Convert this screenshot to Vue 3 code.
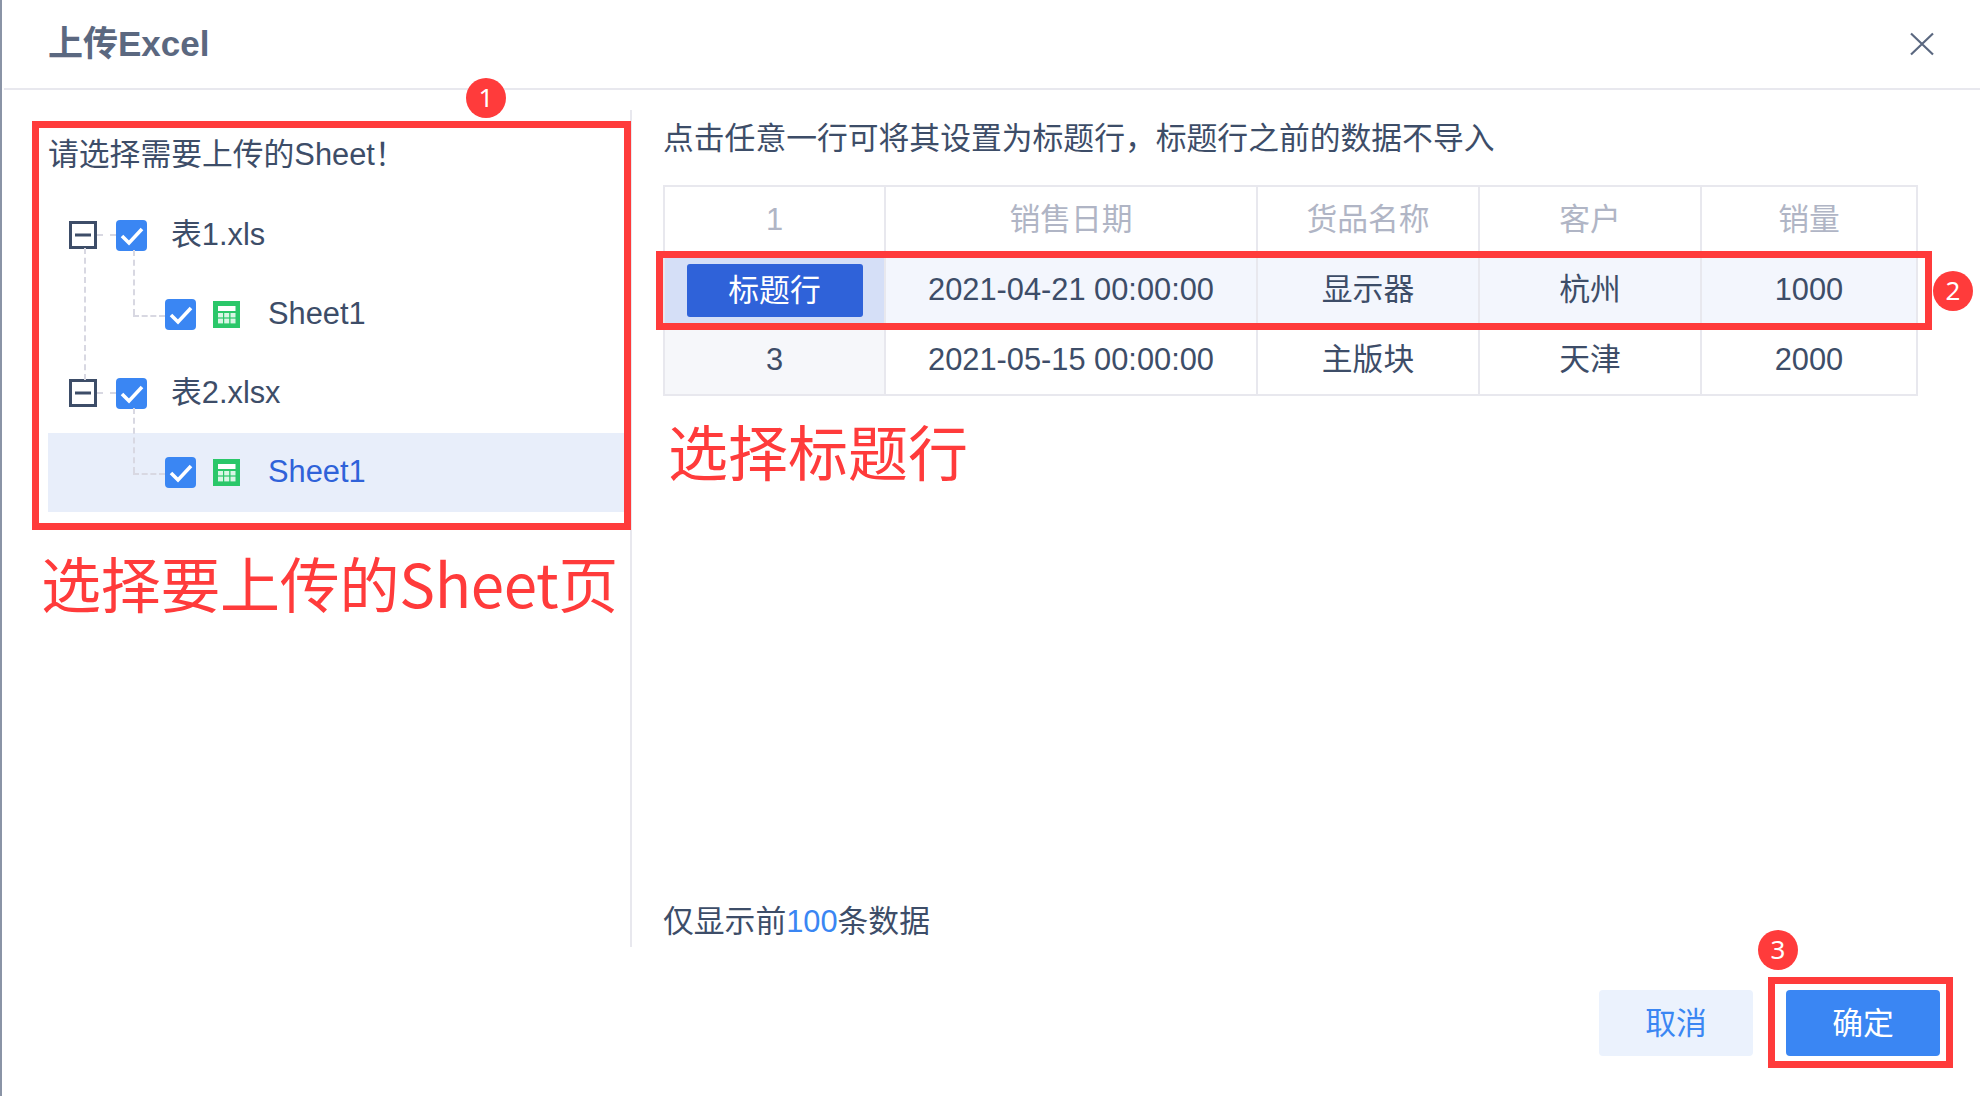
<template>
  <div class="dialog">
    <div class="header">
      <span class="title">上传Excel</span>
      <svg class="close" width="24" height="24" viewBox="0 0 24 24">
        <path d="M1 1.5 23 22.5M23 1.5 1 22.5" stroke="#5b6880" stroke-width="2.2" fill="none" />
      </svg>
    </div>

    <div class="body">
      <div class="left">
        <div class="prompt">请选择需要上传的Sheet！</div>
        <div class="tree">
          <!-- 树的虚线 -->
          <i class="dash v v-root"></i>
          <i class="dash h h-file1"></i>
          <i class="dash h h-file2"></i>
          <i class="dash v v-child1"></i>
          <i class="dash h h-child1"></i>
          <i class="dash v v-child2"></i>
          <i class="dash h h-child2"></i>

          <div
            v-for="node in nodes"
            :key="node.id"
            class="node"
            :class="{ child: node.child, active: node.active }"
          >
            <svg v-if="!node.child" class="fold" width="28" height="28" viewBox="0 0 28 28">
              <rect x="1.5" y="1.5" width="25" height="25" fill="#fff" stroke="#3d4d68" stroke-width="3" />
              <path d="M6 14H22" stroke="#3d4d68" stroke-width="3" />
            </svg>
            <svg class="check" width="31" height="31" viewBox="0 0 31 31">
              <rect width="31" height="31" rx="4" fill="#3a86f3" />
              <path d="M6 16 13 23 26 9" stroke="#fff" stroke-width="3.6" fill="none" />
            </svg>
            <svg v-if="node.child" class="sheet" width="27" height="27" viewBox="0 0 27 27">
              <rect width="27" height="27" fill="#2ac769" />
              <rect x="5" y="5" width="17.5" height="5" fill="#fff" />
              <g fill="#d9f6e5">
                <rect x="5" y="12" width="5" height="4.4" />
                <rect x="11.2" y="12" width="5" height="4.4" />
                <rect x="17.5" y="12" width="5" height="4.4" />
                <rect x="5" y="17.6" width="5" height="4.8" />
                <rect x="11.2" y="17.6" width="5" height="4.8" />
                <rect x="17.5" y="17.6" width="5" height="4.8" />
              </g>
            </svg>
            <span class="label">{{ node.label }}</span>
          </div>
        </div>
      </div>

      <div class="right">
        <div class="tip">点击任意一行可将其设置为标题行，标题行之前的数据不导入</div>
        <table class="grid">
          <colgroup>
            <col v-for="w in colWidths" :key="w.id" :style="{ width: w.px + 'px' }" />
          </colgroup>
          <tbody>
            <tr class="head">
              <td v-for="h in heads" :key="h">{{ h }}</td>
            </tr>
            <tr class="picked">
              <td class="no"><span class="tag">标题行</span></td>
              <td v-for="c in rows[0]" :key="c">{{ c }}</td>
            </tr>
            <tr class="last">
              <td class="no">3</td>
              <td v-for="c in rows[1]" :key="c">{{ c }}</td>
            </tr>
          </tbody>
        </table>
        <div class="note">仅显示前<em>100</em>条数据</div>
      </div>
    </div>

    <div class="footer">
      <button class="btn cancel">取消</button>
      <button class="btn ok">确定</button>
    </div>

    <!-- 标注层 -->
    <div class="mark box1"></div>
    <div class="mark box2"></div>
    <div class="mark box3"></div>
    <div class="badge b1">1</div>
    <div class="badge b2">2</div>
    <div class="badge b3">3</div>
    <div class="words w1">选择要上传的Sheet页</div>
    <div class="words w2">选择标题行</div>
  </div>
</template>

<script setup>
const nodes = [
  { id: 1, label: '表1.xls' },
  { id: 2, label: 'Sheet1', child: true },
  { id: 3, label: '表2.xlsx' },
  { id: 4, label: 'Sheet1', child: true, active: true },
]

const colWidths = [
  { id: 'a', px: 221 },
  { id: 'b', px: 372 },
  { id: 'c', px: 222 },
  { id: 'd', px: 222 },
  { id: 'e', px: 216 },
]

const heads = ['1', '销售日期', '货品名称', '客户', '销量']

const rows = [
  ['2021-04-21 00:00:00', '显示器', '杭州', '1000'],
  ['2021-05-15 00:00:00', '主版块', '天津', '2000'],
]
</script>

<style>
html,
body {
  margin: 0;
  background: #fff;
}
</style>

<style scoped>
.dialog {
  position: relative;
  width: 1980px;
  height: 1096px;
  overflow: hidden;
  background: #fff;
  box-shadow: inset 2px 0 0 #8a94a6;
  font-family: "Liberation Sans", "Noto Sans CJK SC", sans-serif;
  font-size: 30.8px;
  color: #3d4d68;
}

.header {
  display: flex;
  align-items: center;
  justify-content: space-between;
  box-sizing: border-box;
  height: 90px;
  margin-left: 4px;
  padding: 0 46px 0 44px;
  border-bottom: 2px solid #e8e8ee;
}

.title {
  font-size: 35px;
  font-weight: 700;
  line-height: 40px;
  color: #5b6880;
}

.close {
  margin-top: -1px;
}

.body {
  display: flex;
  height: 837px;
  margin-top: 20px;
}

.left {
  box-sizing: border-box;
  width: 634px;
  padding: 22px 6px 0 48px;
  border-right: 2px solid #e8e8ee;
}

.prompt {
  line-height: 46px;
}

.tree {
  position: relative;
  margin-top: 18px;
}

.node {
  display: flex;
  align-items: center;
  height: 79px;
  padding-left: 21px;
}

.node.child {
  padding-left: 117px;
}

.node.active {
  background: #e8eefa;
  color: #2f62d9;
}

.fold {
  margin-right: 19px;
  margin-bottom: 1px;
}

.check {
  margin-bottom: 1px;
}

.label {
  margin-left: 24px;
  margin-bottom: 2px;
  line-height: 40px;
}

.child .sheet {
  margin-left: 17px;
}

.child .label {
  margin-left: 28px;
}

.dash {
  position: absolute;
  z-index: 1;
}

.dash.v {
  width: 0;
  border-left: 2px dashed #d8d8e2;
}

.dash.h {
  height: 0;
  border-top: 2px dashed #d8d8e2;
}

.v-root {
  left: 36px;
  top: 52px;
  height: 132px;
}

.h-file1 {
  left: 49px;
  top: 38px;
  width: 19px;
}

.h-file2 {
  left: 49px;
  top: 196px;
  width: 19px;
}

.v-child1 {
  left: 85px;
  top: 54px;
  height: 65px;
}

.h-child1 {
  left: 85px;
  top: 119px;
  width: 32px;
}

.v-child2 {
  left: 85px;
  top: 212px;
  height: 65px;
}

.h-child2 {
  left: 85px;
  top: 277px;
  width: 32px;
}

.right {
  display: flex;
  flex-direction: column;
  flex: 1;
  padding: 6px 62px 2px 31px;
}

.tip {
  line-height: 46px;
}

.grid {
  width: 1253px;
  margin-top: 23px;
  border-collapse: collapse;
  table-layout: fixed;
}

.grid td {
  box-sizing: border-box;
  height: 70px;
  padding: 0 0 2px;
  border: 2px solid #e8e8ee;
  line-height: 36px;
  text-align: center;
}

.grid .last td {
  height: 69px;
}

.head td {
  color: #b0b5c5;
}

.picked td {
  background: #f3f6fd;
}

.grid td.no {
  background: #f6f7fa;
}

.picked td.no {
  background: #d5dff7;
}

.tag {
  display: inline-block;
  width: 176px;
  height: 53px;
  border-radius: 3px;
  background: #2f62d9;
  color: #fff;
  line-height: 53px;
  vertical-align: middle;
}

.note {
  margin-top: auto;
  line-height: 46px;
}

.note em {
  font-style: normal;
  color: #3a86f3;
}

.footer {
  display: flex;
  justify-content: flex-end;
  gap: 33px;
  margin-top: 43px;
  padding-right: 40px;
}

.btn {
  width: 154px;
  height: 66px;
  padding: 0 0 6px;
  border: none;
  border-radius: 4px;
  font-family: "Noto Sans CJK SC", sans-serif;
  font-size: 30.8px;
}

.cancel {
  background: #ebf2fd;
  color: #3a86f3;
}

.ok {
  background: #3a86f3;
  color: #fff;
}

.mark {
  position: absolute;
  box-sizing: border-box;
  border: 7px solid #ff3b3b;
}

.box1 {
  left: 32px;
  top: 121px;
  width: 599px;
  height: 409px;
}

.box2 {
  left: 656px;
  top: 251px;
  width: 1276px;
  height: 79px;
}

.box3 {
  left: 1768px;
  top: 977px;
  width: 185px;
  height: 91px;
}

.badge {
  position: absolute;
  width: 40px;
  height: 40px;
  border-radius: 50%;
  background: #ff3b3b;
  color: #fff;
  font-family: "Noto Sans", sans-serif;
  font-size: 26px;
  line-height: 38px;
  text-align: center;
}

.b1 {
  left: 466px;
  top: 78px;
}

.b2 {
  left: 1933px;
  top: 271px;
}

.b3 {
  left: 1758px;
  top: 930px;
}

.words {
  position: absolute;
  font-family: "Noto Sans CJK SC", sans-serif;
  font-size: 60px;
  line-height: 70px;
  color: #ff3b3b;
}

.w1 {
  left: 41px;
  top: 547px;
  letter-spacing: -0.3px;
}

.w2 {
  left: 668px;
  top: 415px;
}
</style>
